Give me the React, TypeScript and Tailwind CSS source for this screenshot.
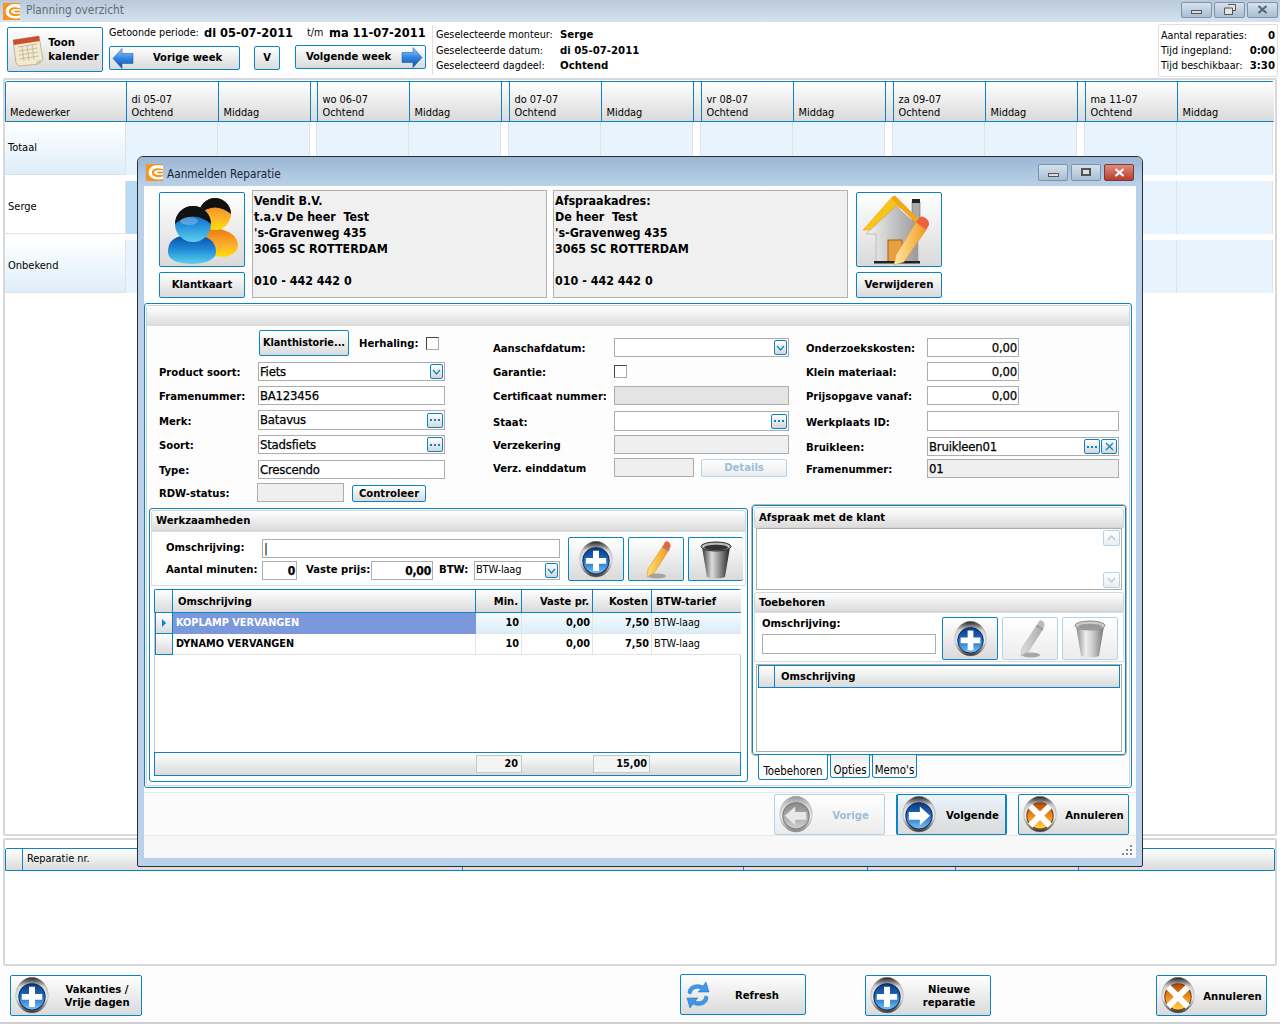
import type { ReactNode } from 'react';

const FONT = "font-['DejaVu_Sans_Condensed','DejaVu_Sans',sans-serif]";
const btnBase = 'border border-[#0b84c4] rounded-[2px] bg-linear-to-b from-white to-[#dadada] font-bold text-black flex items-center justify-center whitespace-nowrap pt-[1px]';
const btnOff = 'border border-[#b5d3e6] rounded-[2px] bg-linear-to-b from-white to-[#ececec] font-bold text-[#9dbfd8] flex items-center justify-center whitespace-nowrap pt-[1px]';
const hdrBar = 'bg-linear-to-b from-white to-[#dcdcdc] border border-[#d4d4d4] rounded-t-[3px] font-bold text-[11.2px] flex items-center pl-[4px] pt-[2px]';
const headCell = 'bg-linear-to-b from-white to-[#dadada] border-r border-[#0b84c4] relative';

// ---- drawn icons ----

function Logo({ size = 16 }: { size?: number }) {
  return (
    <svg width={size} height={size} viewBox="0 0 16 16">
      <rect width="16" height="16" fill="#f7941d" />
      <path d="M16 1.500 C8 -0.500 2.500 3 2.500 8 C2.500 12.500 8 16 16 14 L16 11.500 C10 13.500 5.500 11.500 5.500 8 C5.500 4.500 10 2.800 16 4.800Z" fill="#fff" />
      <path d="M16 6 C11 5 7.500 6 7.500 8 C7.500 10 11 11 16 10 L16 8.600 C12.500 9.200 10.500 9 10.500 8 C10.500 7 12.500 6.800 16 7.500Z" fill="#fff" />
    </svg>
  );
}

function Orb({ kind, w = 34, h = 38 }: { kind: 'plus' | 'right' | 'left' | 'x'; w?: number; h?: number }) {
  const c =
    kind === 'x'
      ? ['#ffd84a', '#f08a1c', '#b04a08']
      : kind === 'left'
        ? ['#cfcfcf', '#a9a9a9', '#8a8a8a']
        : ['#7fc4f2', '#1f6fc4', '#0b3a80'];
  const id = 'orb-' + kind;
  return (
    <svg width={w} height={h} viewBox="0 0 40 44">
      <defs>
        <linearGradient id={id + '-s'} x1="0" y1="0" x2="0" y2="1">
          <stop offset="0" stopColor={kind === 'left' ? '#999' : '#222'} />
          <stop offset=".25" stopColor="#cfcfcf" />
          <stop offset=".6" stopColor="#eee" />
          <stop offset="1" stopColor={kind === 'left' ? '#888' : '#333'} />
        </linearGradient>
        <linearGradient id={id + '-f'} x1="0" y1="1" x2="0" y2="0">
          <stop offset="0" stopColor={c[0]} />
          <stop offset=".5" stopColor={c[1]} />
          <stop offset="1" stopColor={c[2]} />
        </linearGradient>
      </defs>
      <ellipse cx="20" cy="21" rx="19" ry="21" fill={`url(#${id}-s)`} stroke="#8a8a8a" strokeWidth=".5" />
      <circle cx="20" cy="23" r="15.500" fill={`url(#${id}-f)`} stroke={kind === 'left' ? '#777' : kind === 'x' ? '#7a3a08' : '#0a2a60'} strokeWidth="1.200" />
      {kind === 'plus' && <path d="M16.500 11h7v8.500H32v7h-8.500v8.500h-7v-8.500H8v-7h8.500z" fill="#fff" />}
      {kind === 'right' && <path d="M8 18.500h13V12l12 11-12 11v-6.500H8z" fill="#fff" />}
      {kind === 'left' && <path d="M32 18.500H19V12L7 23l12 11v-6.500h13z" fill="#e8e8e8" />}
      {kind === 'x' && <path d="M11 9l9 9 9-9 5 5-9 9 9 9-5 5-9-9-9 9-5-5 9-9-9-9z" fill="#fff" />}
    </svg>
  );
}

function Pencil({ muted = false }: { muted?: boolean }) {
  const id = muted ? 'pen-m' : 'pen-c';
  return (
    <svg width="34" height="40" viewBox="0 0 34 40">
      <defs>
        <linearGradient id={id} x1="0" y1="0" x2="1" y2="0">
          <stop offset="0" stopColor={muted ? '#ddd' : '#ffe070'} />
          <stop offset="1" stopColor={muted ? '#aaa' : '#f29a1a'} />
        </linearGradient>
      </defs>
      <ellipse cx="18" cy="36" rx="9" ry="2.500" fill="#8a8a8a" opacity=".7" />
      <path d="M24 6l6 4-15 23-7 4 1-8z" fill={`url(#${id})`} stroke={muted ? '#aaa' : '#d98a10'} strokeWidth=".5" />
      <path d="M24 6l6 4 1.500-3.500C32 3 28 0 26 2z" fill={muted ? '#bbb' : '#f0603a'} />
      <path d="M23.500 6.500l6.500 4" stroke={muted ? '#999' : '#888'} strokeWidth="2" />
    </svg>
  );
}

function Trash({ muted = false }: { muted?: boolean }) {
  const id = muted ? 'tr-m' : 'tr-c';
  const a = muted ? '#777' : '#222';
  return (
    <svg width="34" height="40" viewBox="0 0 34 40">
      <defs>
        <linearGradient id={id} x1="0" y1="0" x2="1" y2="0">
          <stop offset="0" stopColor={muted ? '#888' : '#333'} />
          <stop offset=".35" stopColor={muted ? '#eee' : '#ddd'} />
          <stop offset=".6" stopColor={muted ? '#ccc' : '#999'} />
          <stop offset="1" stopColor={muted ? '#777' : '#222'} />
        </linearGradient>
      </defs>
      <path d="M3 7L8 37Q17 40 26 37L31 7z" fill={`url(#${id})`} />
      <ellipse cx="17" cy="6.500" rx="15" ry="4.500" fill={muted ? '#ccc' : '#bbb'} stroke={muted ? '#888' : a} />
      <ellipse cx="17" cy="7.500" rx="12" ry="2.800" fill={muted ? '#999' : '#333'} />
    </svg>
  );
}

function Calendar() {
  return (
    <svg width="34" height="34" viewBox="0 0 34 34">
      <path d="M2 7l26-4 4 24-4 4-20 2-3-3z" fill="#f1ead0" stroke="#9a947a" strokeWidth=".6" />
      <path d="M2 7l26-4 .8 5L2.800 12z" fill="#c9502c" />
      <path d="M7 14l19-3M7.500 18l19-3M8 22l19-3M8.500 26l19-3M11 13l2 15M16 12.500l2 15M21 11.500l2 15" stroke="#b5ae92" strokeWidth=".7" />
      <path d="M8 33l20-2 4-4-6 1-1 3z" fill="#cfc8aa" />
    </svg>
  );
}

function Arrow({ dir }: { dir: 'left' | 'right' }) {
  const id = 'arr-' + dir;
  return (
    <svg width="22" height="21" viewBox="0 0 22 21">
      <defs>
        <linearGradient id={id} x1="0" y1="0" x2="0" y2="1">
          <stop offset="0" stopColor="#9fd0fa" />
          <stop offset=".5" stopColor="#2f86e0" />
          <stop offset="1" stopColor="#0f4fa8" />
        </linearGradient>
      </defs>
      <path d={dir === 'left' ? 'M1 10.500L10 0.500v5h11v10H10v5z' : 'M21 10.500L12 0.500v5H1v10h11v5z'} fill={`url(#${id})`} stroke="#0f4fa8" strokeWidth=".5" />
    </svg>
  );
}

function People() {
  return (
    <svg width="74" height="70" viewBox="0 0 74 70">
      <defs>
        <linearGradient id="pp-o" x1="0" y1="0" x2="0" y2="1">
          <stop offset="0" stopColor="#e87a10" />
          <stop offset=".6" stopColor="#ffb030" />
          <stop offset="1" stopColor="#ffe000" />
        </linearGradient>
        <linearGradient id="pp-b" x1="0" y1="0" x2="0" y2="1">
          <stop offset="0" stopColor="#0b4aa8" />
          <stop offset=".5" stopColor="#1f8ad8" />
          <stop offset="1" stopColor="#5fd0f0" />
        </linearGradient>
      </defs>
      <path d="M38 36C50 30 73 36 73 50C73 58 66 60 60 62L38 60z" fill="url(#pp-o)" />
      <circle cx="50" cy="19" r="16" fill="url(#pp-o)" />
      <path d="M34 19A16 16 0 0 1 66 19Q50 6 34 19z" fill="#111" />
      <path d="M3 57C3 44 12 40 27 40C43 40 51 46 51 57C51 65 40 69 27 69C13 69 3 65 3 57z" fill="url(#pp-b)" />
      <circle cx="28" cy="29" r="18" fill="url(#pp-b)" />
      <path d="M10 29A18 18 0 0 1 46 29Q28 14 10 29z" fill="#111" />
      <ellipse cx="24" cy="26" rx="9" ry="4" fill="#fff" opacity=".25" />
    </svg>
  );
}

function House() {
  return (
    <svg width="74" height="72" viewBox="0 0 74 72">
      <defs>
        <linearGradient id="hs-w" x1="0" y1="0" x2="1" y2="0">
          <stop offset="0" stopColor="#f4f4f4" />
          <stop offset="1" stopColor="#9a9a9a" />
        </linearGradient>
        <linearGradient id="hs-p" x1="0" y1="0" x2="1" y2="0">
          <stop offset="0" stopColor="#ffe9a8" />
          <stop offset="1" stopColor="#f09a20" />
        </linearGradient>
      </defs>
      <rect x="50" y="8" width="8" height="26" fill="#aaa" stroke="#555" strokeWidth=".5" />
      <rect x="50" y="5" width="8" height="4" fill="#222" />
      <path d="M1 36L31 2L50 20L34 12L10 36z" fill="#f7c51a" stroke="#f09a20" strokeWidth=".5" />
      <path d="M31 3L56 28" stroke="#f0a81a" strokeWidth="5" />
      <path d="M4 40L34 12L56 32V68H14V40z" fill="url(#hs-w)" stroke="#999" strokeWidth=".5" />
      <rect x="26" y="46" width="14" height="22" fill="#e8a040" stroke="#a56010" />
      <rect x="12" y="67" width="46" height="2.500" fill="#222" />
      <path d="M54 28l10 8-22 32-10 3 2-10z" fill="url(#hs-p)" stroke="#d98a10" strokeWidth=".4" />
      <path d="M54 28l10 8 3-5c1-6-7-10-9-8z" fill="#f0603a" />
    </svg>
  );
}

function Refresh() {
  return (
    <svg width="26" height="30" viewBox="0 0 26 30">
      <path d="M3 13C3 5 12 3 18 6L21 2L24 12L13 12L16 9C11 7 7 9 6 14z" fill="#3f97e8" stroke="#1b66b8" strokeWidth=".5" />
      <path d="M23 17C23 25 14 27 8 24L5 28L2 18L13 18L10 21C15 23 19 21 20 16z" fill="#3f97e8" stroke="#1b66b8" strokeWidth=".5" />
    </svg>
  );
}

function Chevron({ up = false, color = '#0b84c4' }: { up?: boolean; color?: string }) {
  return (
    <svg width="9" height="6" viewBox="0 0 9 6">
      <path d={up ? 'M1 5l3.500-4L8 5' : 'M1 1l3.500 4L8 1'} fill="none" stroke={color} strokeWidth="1.200" />
    </svg>
  );
}

function Caption({ kind, active, wide }: { kind: 'min' | 'max' | 'restore' | 'x'; active?: boolean; wide?: boolean }) {
  const size = wide ? 'w-[31px] h-[16px] ' : 'w-[30px] h-[17px] ';
  return (
    <div
      className={
        size +
        (kind === 'x' && active
          ? 'rounded-[2px] border border-[#7a3a34] bg-linear-to-b from-[#e08a7c] to-[#b83a2c] flex items-center justify-center'
          : 'rounded-[2px] border border-[#7f93a8] bg-linear-to-b from-[#d6e2ee] to-[#a9bed3] flex items-center justify-center')
      }
    >
      {kind === 'min' && <div className="w-[11px] h-[4px] mt-[5px] border border-[#555] bg-[#ddd]" />}
      {kind === 'max' && <div className="w-[10px] h-[8px] border-2 border-[#555] bg-[#ddd]" />}
      {kind === 'restore' && (
        <svg width="12" height="11" viewBox="0 0 12 11">
          <path d="M4 .500h7.500v6H9M.500 4h8v6.500h-8z" fill="#e4e4e4" stroke="#555" />
        </svg>
      )}
      {kind === 'x' && (
        <svg width="11" height="9" viewBox="0 0 11 9">
          <path d="M1.500 1l8 7M9.500 1l-8 7" stroke={active ? '#fff' : '#56687a'} strokeWidth="2.200" />
        </svg>
      )}
    </div>
  );
}

// ---- form bits ----

function Field({ value = '', gray = false, right = false, className = '', children }: { value?: string; gray?: boolean; right?: boolean; className?: string; children?: ReactNode }) {
  return (
    <div
      className={
        'h-full border border-[#adadad] flex items-center pl-[1px] pr-[1px] text-[13px] tracking-[-0.2px] [-webkit-text-stroke:0.25px] whitespace-nowrap text-black ' +
        (gray ? 'bg-[#efefef] ' : 'bg-white ') +
        (right ? 'justify-end ' : 'justify-between ') +
        className
      }
    >
      <span>{value}</span>
      {children}
    </div>
  );
}

function MiniBtn({ children, narrow = false }: { children: ReactNode; narrow?: boolean }) {
  return (
    <div className={(narrow ? 'w-[13px] ' : 'w-[16px] ') + 'h-[15px] border border-[#0b84c4] rounded-[2px] bg-linear-to-b from-white to-[#d6d6d6] flex items-center justify-center shrink-0'}>
      {children}
    </div>
  );
}

const Dots = () => (
  <svg width="10" height="2" viewBox="0 0 10 2">
    <path d="M0 0h2v2H0zM4 0h2v2H4zM8 0h2v2H8z" fill="#0b84c4" />
  </svg>
);

function Row({ label, w, className, children }: { label: string; w: string; className: string; children: ReactNode }) {
  return (
    <div className={'flex items-center ' + className}>
      <span className={'font-bold text-[11.2px] whitespace-nowrap shrink-0 pt-[4px] ' + w}>{label}</span>
      {children}
    </div>
  );
}

function Check() {
  return <div className="w-[13px] h-[13px] border border-[#444] border-r-[#aaa] border-b-[#aaa] bg-white" />;
}

function BigBtn({ icon, text, className, off = false }: { icon: ReactNode; text: ReactNode; className: string; off?: boolean }) {
  return (
    <div className={(off ? btnOff : btnBase) + ' text-[11.2px] leading-[13px] text-center ' + className}>
      <div className="pl-[4px] shrink-0">{icon}</div>
      <div className="flex-1 pl-[4px]">{text}</div>
    </div>
  );
}

// ---- main page data ----

const days = ['di 05-07', 'wo 06-07', 'do 07-07', 'vr 08-07', 'za 09-07', 'ma 11-07'];
const gridCols = 'grid grid-cols-[121px_92px_92px_7px_92px_92px_8px_92px_92px_8px_92px_92px_8px_92px_92px_8px_92px_96px]';

function PlanRow({ label, alt, selected }: { label: string; alt?: boolean; selected?: boolean }) {
  return (
    <div className={gridCols + ' h-[53px] mb-[6px]'}>
      <div
        className={
          'flex items-center pl-[3px] text-[11px] border-r border-b border-[#e2e2e2] ' +
          (alt ? 'bg-linear-to-b from-white to-[#ddeefa]' : 'bg-white')
        }
      >
        {label}
      </div>
      {days.map((d, i) => (
        <PlanDay key={d} last={i === 5} first={i === 0} selected={selected} />
      ))}
    </div>
  );
}

function PlanDay({ last, first, selected }: { last: boolean; first: boolean; selected?: boolean }) {
  return (
    <>
      <div className={(selected && first ? 'bg-[#b9dcf4]' : 'bg-[#e8f4fd]') + ' border-r border-[#e2e2e2]'} />
      <div className="bg-[#e8f4fd] border-r border-[#e2e2e2]" />
      {!last && <div className="bg-white border-r border-[#e2e2e2]" />}
    </>
  );
}

function PlanHead({ day, last }: { day: string; last: boolean }) {
  return (
    <>
      <div className={headCell + ' pl-[4.500px] flex flex-col justify-end pb-[2px] leading-[13px]'}>
        <span>{day}</span>
        <span>Ochtend</span>
      </div>
      <div className={headCell + (last ? ' border-r-0' : '') + ' pl-[4.500px] flex items-end pb-[2px] leading-[13px]'}>Middag</div>
      {!last && <div className={headCell} />}
    </>
  );
}

// ---- dialog ----

function TopSection() {
  const addr = 'bg-[#f0f0f0] border border-[#b0b0b0] w-[295px] h-[108px] mt-[4px] px-[1px] pt-[2px] font-bold text-[12.400px] leading-[16px] whitespace-nowrap';
  return (
    <div className="flex h-[117px] pl-[15px] shrink-0">
      <div className="w-[86px] mt-[6px] shrink-0">
        <div className={btnBase + ' h-[75px]'}>
          <People />
        </div>
        <div className={btnBase + ' h-[26px] mt-[5px] text-[11.300px]'}>Klantkaart</div>
      </div>
      <div className={addr + ' ml-[7px]'}>
        <div>Vendit B.V.</div>
        <div>t.a.v De heer&nbsp; Test</div>
        <div>'s-Gravenweg 435</div>
        <div>3065 SC ROTTERDAM</div>
        <div className="h-[16px]" />
        <div>010 - 442 442 0</div>
      </div>
      <div className={addr + ' ml-[6px]'}>
        <div>Afspraakadres:</div>
        <div>De heer&nbsp; Test</div>
        <div>'s-Gravenweg 435</div>
        <div>3065 SC ROTTERDAM</div>
        <div className="h-[16px]" />
        <div>010 - 442 442 0</div>
      </div>
      <div className="w-[86px] mt-[6px] ml-[8px] shrink-0">
        <div className={btnBase + ' h-[75px]'}>
          <House />
        </div>
        <div className={btnBase + ' h-[26px] mt-[5px] text-[11.300px]'}>Verwijderen</div>
      </div>
    </div>
  );
}

function FormArea() {
  return (
    <div className="flex h-[179px] pl-[12px] shrink-0">
      <div className="w-[334px] shrink-0">
        <div className="flex items-center h-[26px] mt-[4px] pl-[100px]">
          <div className={btnBase + ' w-[90px] h-[26px] text-[10.800px]'}>Klanthistorie...</div>
          <span className="font-bold text-[11.2px] ml-[10px] w-[67px] pt-[2px]">Herhaling:</span>
          <Check />
        </div>
        <Row label="Product soort:" w="w-[99px]" className="mt-[6px] h-[19px]">
          <div className="w-[187px] h-full">
            <Field value="Fiets">
              <MiniBtn narrow>
                <Chevron />
              </MiniBtn>
            </Field>
          </div>
        </Row>
        <Row label="Framenummer:" w="w-[99px]" className="mt-[5px] h-[19px]">
          <div className="w-[187px] h-full">
            <Field value="BA123456" />
          </div>
        </Row>
        <Row label="Merk:" w="w-[99px]" className="mt-[5px] h-[20px]">
          <div className="w-[187px] h-full">
            <Field value="Batavus">
              <MiniBtn>
                <Dots />
              </MiniBtn>
            </Field>
          </div>
        </Row>
        <Row label="Soort:" w="w-[99px]" className="mt-[5px] h-[19px]">
          <div className="w-[187px] h-full">
            <Field value="Stadsfiets">
              <MiniBtn>
                <Dots />
              </MiniBtn>
            </Field>
          </div>
        </Row>
        <Row label="Type:" w="w-[99px]" className="mt-[6px] h-[19px]">
          <div className="w-[187px] h-full">
            <Field value="Crescendo" />
          </div>
        </Row>
        <Row label="RDW-status:" w="w-[98px]" className="mt-[4px] h-[19px]">
          <div className="w-[87px] h-full">
            <Field gray />
          </div>
          <div className={btnBase + ' w-[74px] h-[17px] ml-[8px] mt-[2px] text-[11.200px]'}>Controleer</div>
        </Row>
      </div>

      <div className="w-[313px] shrink-0">
        <Row label="Aanschafdatum:" w="w-[121px]" className="mt-[12px] h-[19px]">
          <div className="w-[175px] h-full">
            <Field>
              <MiniBtn narrow>
                <Chevron />
              </MiniBtn>
            </Field>
          </div>
        </Row>
        <Row label="Garantie:" w="w-[121px]" className="mt-[5px] h-[19px]">
          <Check />
        </Row>
        <Row label="Certificaat nummer:" w="w-[121px]" className="mt-[5px] h-[19px]">
          <div className="w-[175px] h-full">
            <Field className="!bg-[#e4e4e4]" />
          </div>
        </Row>
        <Row label="Staat:" w="w-[121px]" className="mt-[6px] h-[20px]">
          <div className="w-[175px] h-full">
            <Field>
              <MiniBtn>
                <Dots />
              </MiniBtn>
            </Field>
          </div>
        </Row>
        <Row label="Verzekering" w="w-[121px]" className="mt-[4px] h-[19px]">
          <div className="w-[175px] h-full">
            <Field gray />
          </div>
        </Row>
        <Row label="Verz. einddatum" w="w-[121px]" className="mt-[4px] h-[19px]">
          <div className="w-[80px] h-full">
            <Field gray />
          </div>
          <div className={btnOff + ' w-[86px] h-[18px] ml-[7px] text-[11.200px]'}>Details</div>
        </Row>
      </div>

      <div className="w-[320px] shrink-0">
        <Row label="Onderzoekskosten:" w="w-[121px]" className="mt-[12px] h-[19px]">
          <div className="w-[92px] h-full">
            <Field value="0,00" right />
          </div>
        </Row>
        <Row label="Klein materiaal:" w="w-[121px]" className="mt-[5px] h-[19px]">
          <div className="w-[92px] h-full">
            <Field value="0,00" right />
          </div>
        </Row>
        <Row label="Prijsopgave vanaf:" w="w-[121px]" className="mt-[5px] h-[19px]">
          <div className="w-[92px] h-full">
            <Field value="0,00" right />
          </div>
        </Row>
        <Row label="Werkplaats ID:" w="w-[121px]" className="mt-[6px] h-[20px]">
          <div className="w-[192px] h-full">
            <Field />
          </div>
        </Row>
        <Row label="Bruikleen:" w="w-[121px]" className="mt-[6px] h-[19px]">
          <div className="w-[192px] h-full">
            <Field value="Bruikleen01">
              <div className="flex gap-[1px]">
                <MiniBtn>
                  <Dots />
                </MiniBtn>
                <MiniBtn>
                  <svg width="9" height="9" viewBox="0 0 9 9">
                    <path d="M1 1l7 7M8 1L1 8" stroke="#0b84c4" strokeWidth="1.300" />
                  </svg>
                </MiniBtn>
              </div>
            </Field>
          </div>
        </Row>
        <Row label="Framenummer:" w="w-[121px]" className="mt-[3px] h-[19px]">
          <div className="w-[192px] h-full">
            <Field value="01" gray />
          </div>
        </Row>
      </div>
    </div>
  );
}

const tableCols = 'grid grid-cols-[18px_303px_46px_71px_59px_89px]';

function WorkRow({ name, selected }: { name: string; selected?: boolean }) {
  const cell = 'border-r border-b border-[#e4e4e4] flex items-center justify-end pr-[2px] font-bold ';
  const bg = selected ? 'bg-linear-to-b from-[#f4fafe] to-[#dcedf9] ' : 'bg-white ';
  return (
    <div className={tableCols + ' h-[21px] text-[10.800px]'}>
      <div className={headCell + ' border-b border-l flex items-center justify-center'}>
        {selected && <div className="w-0 h-0 border-y-[4px] border-y-transparent border-l-[4px] border-l-[#0b84c4]" />}
      </div>
      <div
        className={
          (selected ? 'bg-[#7b98dc] text-white ' : 'bg-white text-black border-r border-b border-[#e4e4e4] ') +
          'flex items-center pl-[3px] font-bold'
        }
      >
        {name}
      </div>
      <div className={cell + bg}>10</div>
      <div className={cell + bg}>0,00</div>
      <div className={cell + bg}>7,50</div>
      <div className={bg + 'border-b border-[#e4e4e4] flex items-center pl-[2px]'}>BTW-laag</div>
    </div>
  );
}

function Werkzaamheden() {
  return (
    <div className="w-[599px] h-[274px] mt-[3px] border border-[#0b84c4] rounded-[3px] p-[1px] bg-white shrink-0">
      <div className={hdrBar + ' h-[21px]'}>
        <span>Werkzaamheden</span>
      </div>
      <div className="flex h-[55px] border border-[#dedede] bg-white text-[11.2px] font-bold whitespace-nowrap">
        <div className="w-[416px] pl-[14px] shrink-0">
          <div className="flex items-center h-[19px] mt-[7px]">
            <span className="w-[96px]">Omschrijving:</span>
            <div className="w-[298px] h-full">
              <Field value="|" className="!font-light ![-webkit-text-stroke:0px]" />
            </div>
          </div>
          <div className="flex items-center h-[19px] mt-[3px]">
            <span className="w-[96px]">Aantal minuten:</span>
            <div className="w-[35px] h-full">
              <Field value="0" right className="!text-[12px]" />
            </div>
            <span className="ml-[9px] w-[65px]">Vaste prijs:</span>
            <div className="w-[62px] h-full">
              <Field value="0,00" right className="!text-[12px]" />
            </div>
            <span className="ml-[6px] w-[35px]">BTW:</span>
            <div className="w-[86px] h-full">
              <Field value="BTW-laag" className="!text-[11px] ![-webkit-text-stroke:0px] font-normal">
                <MiniBtn narrow>
                  <Chevron />
                </MiniBtn>
              </Field>
            </div>
          </div>
        </div>
        <div className="flex gap-[4px] mt-[5px] h-[44px]">
          <div className={btnBase + ' w-[56px]'}>
            <Orb kind="plus" />
          </div>
          <div className={btnBase + ' w-[56px]'}>
            <Pencil />
          </div>
          <div className={btnBase + ' w-[55px] border-r-0'}>
            <Trash />
          </div>
        </div>
      </div>
      <div className="ml-[3px] mt-[3px] w-[587px] h-[187px] flex flex-col border-x border-[#c8c8c8]">
        <div className={tableCols + ' h-[24px] -mx-[1px] border border-[#0b84c4] rounded-t-[2px] text-[11.100px] font-bold shrink-0'}>
          <div className={headCell} />
          <div className={headCell + ' flex items-center pl-[5px] pt-[2px]'}>Omschrijving</div>
          <div className={headCell + ' flex items-center justify-end pr-[3px] pt-[2px]'}>Min.</div>
          <div className={headCell + ' flex items-center justify-end pr-[3px] pt-[2px]'}>Vaste pr.</div>
          <div className={headCell + ' flex items-center justify-end pr-[3px] pt-[2px]'}>Kosten</div>
          <div className={headCell + ' flex items-center pl-[4px] pt-[2px] border-r-0'}>BTW-tarief</div>
        </div>
        <WorkRow name="KOPLAMP VERVANGEN" selected />
        <WorkRow name="DYNAMO VERVANGEN" />
        <div className="flex-1 bg-white" />
        <div className="h-[24px] -mx-[1px] border border-[#0b84c4] bg-linear-to-b from-white to-[#dadada] flex text-[10.800px] font-bold shrink-0">
          <div className="w-[321px]" />
          <div className="w-[46px] border border-[#c8c8c8] bg-[#f4f4f4] flex items-center justify-end pr-[3px] my-[2px]">20</div>
          <div className="w-[71px]" />
          <div className="w-[57px] border border-[#c8c8c8] bg-[#f4f4f4] flex items-center justify-end pr-[2px] my-[2px]">15,00</div>
        </div>
      </div>
    </div>
  );
}

function RightPanel() {
  return (
    <div className="w-[374px] ml-[4px] shrink-0">
      <div className="h-[250px] border border-[#0b84c4] rounded-[3px] p-[1px] bg-white outline outline-[#b8b8b8]">
        <div className={hdrBar + ' h-[21px]'}>Afspraak met de klant</div>
        <div className="h-[62px] mx-[2px] border border-[#adadad] bg-white flex justify-end">
          <div className="w-[17px] mr-[1px] flex flex-col justify-between py-[1px]">
            <div className="h-[16px] border border-[#b5d3e6] rounded-[2px] bg-linear-to-b from-white to-[#ececec] flex items-center justify-center">
              <Chevron up color="#a9cbe0" />
            </div>
            <div className="h-[16px] border border-[#b5d3e6] rounded-[2px] bg-linear-to-b from-white to-[#ececec] flex items-center justify-center">
              <Chevron color="#a9cbe0" />
            </div>
          </div>
        </div>
        <div className={hdrBar + ' h-[20px] mt-[2px]'}>Toebehoren</div>
        <div className="h-[50px] flex border border-[#dedede] bg-white">
          <div className="w-[187px] pl-[7px] shrink-0">
            <div className="font-bold text-[11.2px] mt-[3px] h-[16px]">Omschrijving:</div>
            <div className="w-[174px] h-[20px] mt-[2px]">
              <Field />
            </div>
          </div>
          <div className="flex gap-[4px] mt-[4px] h-[43px]">
            <div className={btnBase + ' w-[56px]'}>
              <Orb kind="plus" w={33} h={37} />
            </div>
            <div className={btnOff + ' w-[56px]'}>
              <Pencil muted />
            </div>
            <div className={btnOff + ' w-[56px]'}>
              <Trash muted />
            </div>
          </div>
        </div>
        <div className="h-[88px] mx-[2px] mt-[2px] border border-[#adadad] bg-white px-[1px]">
          <div className="h-[23px] border border-[#0b84c4] bg-linear-to-b from-white to-[#dadada] flex font-bold text-[11.2px]">
            <div className="w-[16px] border-r border-[#0b84c4]" />
            <div className="pl-[6px] pt-[2px] flex items-center">Omschrijving</div>
          </div>
        </div>
      </div>
      <div className="flex text-[11.400px] leading-[14px] pl-[6px] relative">
        <div className="w-[70px] h-[25px] bg-white border-x border-b border-[#0b84c4] rounded-b-[3px] flex items-end justify-center pb-[1px]">Toebehoren</div>
        <div className="w-[40px] h-[23px] ml-[2px] bg-linear-to-b from-[#eee] to-white border-x border-b border-[#0b84c4] rounded-b-[3px] flex items-end justify-center">Opties</div>
        <div className="w-[45px] h-[23px] ml-[2px] bg-linear-to-b from-[#eee] to-white border-x border-b border-[#0b84c4] rounded-b-[3px] flex items-end justify-center">Memo's</div>
      </div>
    </div>
  );
}

function Dialog() {
  return (
    <div className="absolute left-[137px] top-[156px] w-[1006px] h-[711px] border border-[#2a2f36] rounded-t-[6px] rounded-b-[2px] bg-[#b9d2e9] flex flex-col overflow-hidden">
      <div className="h-[29px] bg-linear-to-b from-[#9cb6d4] to-[#b9d2e9] flex items-center pl-[8px] pr-[8px] pt-[2px] shrink-0">
        <Logo size={17} />
        <span className="ml-[4px] mt-[4px] text-[11.700px] text-[#1a2430]">Aanmelden Reparatie</span>
        <div className="ml-auto flex gap-[3px] -mt-[1px]">
          <Caption kind="min" />
          <Caption kind="max" />
          <Caption kind="x" active />
        </div>
      </div>
      <div className="mx-[6px] h-[672px] bg-white flex flex-col shrink-0">
        <TopSection />
        <div className="w-[988px] h-[485px] border border-[#0b84c4] rounded-[3px] p-[1px] shrink-0">
          <div className="h-full border border-[#d4d4d4] rounded-[2px] bg-[#fdfdfd]">
            <div className="h-[20px] bg-linear-to-b from-white to-[#dcdcdc]" />
            <FormArea />
            <div className="flex pl-[2px]">
              <Werkzaamheden />
              <RightPanel />
            </div>
          </div>
        </div>
        <div className="h-[44px] mt-[4px] border-y border-[#e8e8e8] bg-[#fbfbfb] flex items-end justify-end pr-[7px] gap-[11px] shrink-0">
          <BigBtn off className="w-[111px] h-[41px]" icon={<Orb kind="left" />} text="Vorige" />
          <BigBtn className="w-[111px] h-[41px] border-x-2 !from-[#eaf5fc]" icon={<Orb kind="right" />} text="Volgende" />
          <BigBtn className="w-[111px] h-[41px]" icon={<Orb kind="x" />} text="Annuleren" />
        </div>
        <div className="flex-1 bg-[#f8f8f8] flex items-end justify-end p-[3px]">
          <div className="grid grid-cols-3 gap-[1px] w-[11px]">
            {[0, 1, 2, 3, 4, 5, 6, 7, 8].map((i) => (
              <div key={i} className={i === 0 || i === 1 || i === 3 ? 'h-[3px]' : 'h-[2px] w-[2px] bg-[#8a8a8a]'} />
            ))}
          </div>
        </div>
      </div>
    </div>
  );
}

export default function App() {
  return (
    <div className={'relative w-[1280px] h-[1024px] overflow-hidden bg-white text-black ' + FONT}>
      <div className="h-[22px] bg-linear-to-b from-[#b9c9da] to-[#d6e3ef] flex items-center pl-[3px] pr-[2px]">
        <Logo size={17} />
        <span className="ml-[6px] text-[11.800px] text-[#5e6c78]">Planning overzicht</span>
        <div className="ml-auto flex gap-[2px] -mt-[3px]">
          <Caption kind="min" wide />
          <Caption kind="restore" wide />
          <Caption kind="x" wide />
        </div>
      </div>

      <div className="h-[56px] flex pl-[7px] text-[10.700px] whitespace-nowrap">
        <div className={btnBase + ' w-[96px] h-[45px] mt-[5px] text-[11.300px] leading-[14px]'}>
          <Calendar />
          <div className="ml-[3px]">
            Toon
            <br />
            kalender
          </div>
        </div>
        <div className="w-[317px] ml-[6px] shrink-0">
          <div className="flex items-center h-[20px] mt-[1px]">
            <span className="w-[90px]">Getoonde periode:</span>
            <span className="ml-[5px] w-[89px] font-bold text-[12.700px]">di 05-07-2011</span>
            <span className="ml-[14px] w-[16px]">t/m</span>
            <span className="ml-[6px] font-bold text-[12.700px]">ma 11-07-2011</span>
          </div>
          <div className="flex items-start mt-[2px]">
            <div className={btnBase + ' w-[131px] h-[24px] mt-[1px]'}>
              <div className="pl-[2px]"><Arrow dir="left" /></div>
              <span className="flex-1 text-center pl-[2px] text-[11.100px]">Vorige week</span>
            </div>
            <div className={btnBase + ' w-[26px] h-[24px] ml-[14px] mt-[1px] text-[11.100px]'}>V</div>
            <div className={btnBase + ' w-[131px] h-[24px] ml-[15px] text-[11.100px]'}>
              <span className="flex-1 text-center">Volgende week</span>
              <div className="pr-[2px]"><Arrow dir="right" /></div>
            </div>
          </div>
        </div>
        <div className="ml-[6px] h-[50px] mt-[3px] border-l border-[#e0e0e0] pl-[3px] pt-[2px] leading-[15.500px]">
          <div className="flex"><span className="w-[124px]">Geselecteerde monteur:</span><b className="text-[11.300px]">Serge</b></div>
          <div className="flex"><span className="w-[124px]">Geselecteerde datum:</span><b className="text-[11.300px]">di 05-07-2011</b></div>
          <div className="flex"><span className="w-[124px]">Geselecteerd dagdeel:</span><b className="text-[11.300px]">Ochtend</b></div>
        </div>
        <div className="ml-auto mr-[2px] w-[120px] h-[53px] mt-[2px] border border-[#e0e0e0] rounded-[2px] px-[2px] pt-[3px] leading-[15px]">
          <div className="flex justify-between"><span>Aantal reparaties:</span><b className="text-[11.300px]">0</b></div>
          <div className="flex justify-between"><span>Tijd ingepland:</span><b className="text-[11.300px]">0:00</b></div>
          <div className="flex justify-between"><span>Tijd beschikbaar:</span><b className="text-[11.300px]">3:30</b></div>
        </div>
      </div>

      <div className="h-[758px] border-2 border-[#d8d8d8] rounded-[2px] mx-[3px] pt-[1px] text-[10.900px]">
        <div className={gridCols + ' h-[41px] border border-[#0b84c4] rounded-t-[2px] w-[1269px]'}>
          <div className={headCell + ' flex items-end pl-[4px] pb-[2px] leading-[13px]'}>Medewerker</div>
          {days.map((d) => (
            <PlanHead key={d} day={d} last={d === 'ma 11-07'} />
          ))}
        </div>
        <PlanRow label="Totaal" alt />
        <PlanRow label="Serge" selected />
        <PlanRow label="Onbekend" alt />
      </div>

      <div className="h-[128px] mt-[2px] border-2 border-[#d8d8d8] rounded-[2px] mx-[3px] pt-[8px] text-[10.900px]">
        <div className="flex h-[23px] w-[1270px] border border-[#0b84c4] rounded-t-[2px]">
          <div className={headCell + ' w-[17px]'} />
          <div className={headCell + ' w-[440px] flex items-center pl-[4px]'}>Reparatie nr.</div>
          <div className={headCell + ' w-[281px]'} />
          <div className={headCell + ' w-[124px]'} />
          <div className={headCell + ' w-[88px]'} />
          <div className={headCell + ' w-[123px]'} />
          <div className={headCell + ' flex-1 border-r-0'} />
        </div>
      </div>

      <div className="relative h-[58px] border-b-2 border-[#d0d0d0] bg-[#fdfdfd] flex items-start pt-[9px] pl-[10px]">
        <BigBtn className="w-[132px] h-[41px]" icon={<Orb kind="plus" />} text={<>Vakanties /<br />Vrije dagen</>} />
        <BigBtn className="w-[126px] h-[41px] ml-[538px] -mt-[1px]" icon={<Refresh />} text={<span className="pr-[6px]">Refresh</span>} />
        <BigBtn className="w-[126px] h-[41px] ml-[59px]" icon={<Orb kind="plus" />} text={<>Nieuwe<br />reparatie</>} />
        <BigBtn className="w-[111px] h-[41px] ml-[165px]" icon={<Orb kind="x" />} text="Annuleren" />
      </div>

      <Dialog />
    </div>
  );
}
